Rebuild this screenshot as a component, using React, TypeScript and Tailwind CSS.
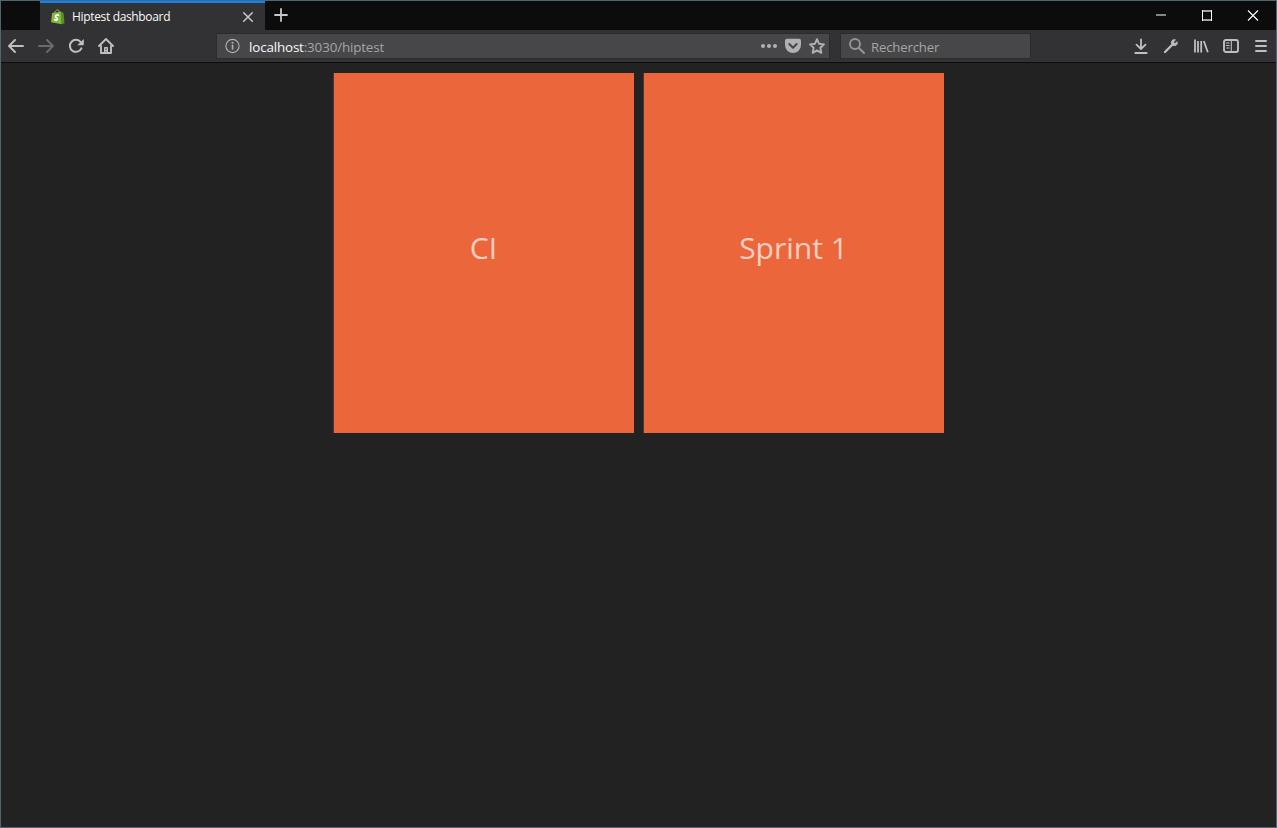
import type { ReactNode } from "react";

function Icon({ children, className = "", w = 16 }: { children: ReactNode; className?: string; w?: number }) {
  return (
    <svg width={w} height={w} viewBox={`0 0 ${w} ${w}`} fill="none" stroke="currentColor" strokeWidth="2" strokeLinecap="round" strokeLinejoin="round" className={`block shrink-0 ${className}`}>
      {children}
    </svg>
  );
}

function Favicon() {
  return (
    <Icon className="ml-[11px]">
      <path d="M1.2 3.9 10 2.4 11 15.2 0 13.2Z" fill="#86b93f" stroke="none" />
      <path d="M9.8 2.4 12.6 4 13.5 14.2 10.4 15.2Z" fill="#558f28" stroke="none" />
      <path d="M3.5 4.5C4 1.8 5.5.8 6.7.9 8 1 8.5 2.5 8.5 4" stroke="#86b93f" strokeWidth="1" />
      <path d="M7.6 6.2C6.1 5.5 4.3 6.2 4.5 7.6 4.7 8.9 6.7 9 6.5 10.3 6.4 11.4 4.7 11.4 3.5 10.6" stroke="#fff" strokeWidth="1.6" />
    </Icon>
  );
}

function TabBar() {
  return (
    <div className="flex h-[29px] bg-[#0c0c0d]">
      <div className="ml-[39px] flex w-[225px] items-center border-t-2 border-[#0a84ff] bg-[#323234]">
        <Favicon />
        <span className="ml-[5px] w-[164px] whitespace-nowrap font-['Open_Sans',sans-serif] text-[12px] leading-4 tracking-[-0.34px] text-[#f9f9fa]">Hiptest dashboard</span>
        <Icon className="ml-[4px] text-[#c8c8c9]">
          <path d="m3.7 3.7 8.6 8.6M12.3 3.7l-8.6 8.6" strokeWidth="1.5" />
        </Icon>
      </div>
      <Icon className="ml-[8px] mt-[6px] text-[#c8c8c9]">
        <path d="M8 2v12M2 8h12" strokeWidth="1.8" />
      </Icon>
      <div className="ml-auto mr-[15px] flex gap-[30px] pt-[6px] text-white">
        <Icon><path d="M3 8h10" strokeWidth="2" strokeLinecap="butt" stroke="#858586" /></Icon>
        <Icon>
          <path d="M3.5 3v11M12.5 3v11" strokeWidth="1" strokeLinecap="butt" />
          <path d="M3 4h10M3 13h10" strokeWidth="2" strokeLinecap="butt" stroke="#a0a0a0" />
          <path d="M3.5 3v11M12.5 3v11" strokeWidth="1" strokeLinecap="butt" />
        </Icon>
        <Icon><path d="m3 3.5 10 10M13 3.5l-10 10" strokeWidth="1.1" strokeLinecap="butt" /></Icon>
      </div>
    </div>
  );
}

function UrlBar() {
  return (
    <div className="ml-[102px] flex h-[26px] w-[614px] items-center border border-[#2b2b2c] bg-[#474749] text-[#b1b1b3]">
      <Icon className="ml-[7px]">
        <circle cx="8.5" cy="8" r="6.6" strokeWidth="1.1" />
        <path d="M8.5 7.4v3.6" strokeWidth="1.6" />
        <circle cx="8.5" cy="4.8" r="1" fill="currentColor" stroke="none" />
      </Icon>
      <span className="ml-[9px] mt-[2px] whitespace-nowrap font-['Open_Sans',sans-serif] text-[13.4px] leading-5 tracking-[-0.15px] text-[#a5a5a6]">
        <span className="text-[#f9f9fa]">localhost</span>:3030/hiptest
      </span>
      <div className="ml-auto mr-[4px] flex gap-[8px]">
        <Icon>
          <g fill="currentColor" stroke="none"><circle cx="2" cy="8" r="2" /><circle cx="8" cy="8" r="2" /><circle cx="14" cy="8" r="2" /></g>
        </Icon>
        <Icon>
          <path d="M2 .8h12q2 0 2 2v4.3a8 8 0 0 1-16 0V2.8q0-2 2-2Z" fill="currentColor" stroke="none" />
          <path d="m4.3 6 3.7 3.7L11.7 6" stroke="#474749" />
        </Icon>
        <Icon>
          <path d="m8 1.2 2.1 4.6 4.9.6-3.6 3.4.9 5L8 12.4l-4.3 2.4.9-5L1 6.4l4.9-.6Z" strokeWidth="1.9" strokeLinejoin="round" />
        </Icon>
      </div>
    </div>
  );
}

function Toolbar() {
  return (
    <div className="flex h-[33px] items-center border-b border-[#0c0c0d] bg-[#323234] pl-[7px] pr-[7px] text-[#bfbfc0]">
      <div className="flex gap-[14px]">
        <Icon><path d="M15 8H1.3M7 2 1 8l6 6" strokeWidth="1.9" /></Icon>
        <Icon className="text-[#6b6b6c]"><path d="M1 8h13.7M9 2l6 6-6 6" strokeWidth="1.9" /></Icon>
        <Icon>
          <path d="M13.4 10.3A6 6 0 1 1 12.7 4.2" />
          <path d="M15.8 1v5.2q0 1-1 1H9.3Z" fill="currentColor" stroke="none" />
        </Icon>
        <Icon>
          <path d="m1 8 7-7 7 7" strokeWidth="1.9" />
          <path d="M3 8v7h10V8" strokeWidth="1.9" />
          <path d="M6.7 15V9.7h2.6V15M8 12.3v.4" strokeWidth="1.4" />
        </Icon>
      </div>
      <UrlBar />
      <div className="ml-[10px] flex h-[26px] w-[191px] items-center border border-[#2b2b2c] bg-[#474749]">
        <Icon className="ml-[8px] text-[#949495]">
          <circle cx="6" cy="6" r="5" strokeWidth="1.9" />
          <path d="m10 10 5 5" strokeWidth="2" />
        </Icon>
        <span className="ml-[6px] mt-[2px] font-['Open_Sans',sans-serif] text-[13.2px] leading-5 tracking-[-0.18px] text-[#a5a5a6]">Rechercher</span>
      </div>
      <div className="ml-auto flex gap-[14px]">
        <Icon><path d="M8 1.5v9M3.5 6.7 8 11l4.5-4.3M2.3 15h11.4" strokeWidth="1.8" /></Icon>
        <Icon>
          <path d="M2 14 9 7" strokeWidth="2.3" />
          <path d="M12.3 1.8C9.7.9 7.7 3.2 8.5 5.8l1.7 1.7c2.6.8 4.9-1.2 4-3.8L12 5.5l-1.4-1.3Z" fill="currentColor" strokeWidth=".7" />
        </Icon>
        <Icon><path d="M2 1.5v13M5 3v11.5M8.2 3v11.5M10.8 3l4 11.3" strokeWidth="1.8" strokeLinecap="butt" /></Icon>
        <Icon>
          <rect x="1" y="2" width="14" height="12" rx="2" strokeWidth="1.9" />
          <path d="M8.3 2v12M3.3 5h2.8M3.3 7.5h2.8M3.8 10h2.3" strokeWidth="1.1" />
        </Icon>
        <Icon><path d="M3 3h10M3 8h10M3 13h10" strokeWidth="1.9" /></Icon>
      </div>
    </div>
  );
}

function Tile({ title }: { title: string }) {
  return (
    <div className="flex h-[360px] w-[300px] items-center justify-center bg-[#ec663c] shadow-[-1px_0_0_#4f342a]">
      <h1 className="mb-[12px] font-['Open_Sans',sans-serif] text-[30px] font-normal leading-[41px] text-white/70">{title}</h1>
    </div>
  );
}

export default function App() {
  return (
    <div className="flex h-screen flex-col overflow-hidden border border-[#536471] bg-[#222222]">
      <TabBar />
      <Toolbar />
      <main className="flex justify-center gap-[10px] pt-[10px]">
        <Tile title="CI" />
        <Tile title="Sprint 1" />
      </main>
    </div>
  );
}
